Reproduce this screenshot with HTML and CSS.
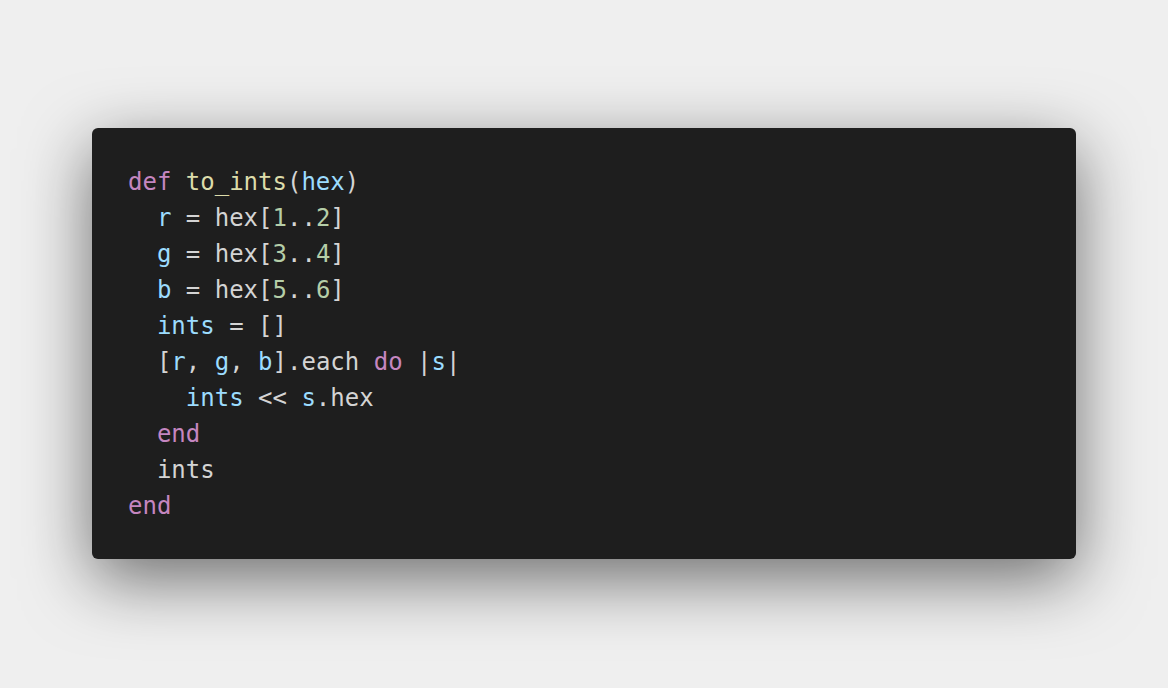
FILE: index.html
```html
<!DOCTYPE html>
<html>
<head>
<meta charset="utf-8">
<link rel="stylesheet" href="styles.css">
</head>
<body>
<div class="stage">
<pre class="card"><code><span class="kw">def</span> <span class="fn">to_ints</span>(<span class="var">hex</span>)
  <span class="var">r</span> = hex[<span class="num">1</span>..<span class="num">2</span>]
  <span class="var">g</span> = hex[<span class="num">3</span>..<span class="num">4</span>]
  <span class="var">b</span> = hex[<span class="num">5</span>..<span class="num">6</span>]
  <span class="var">ints</span> = []
  [<span class="var">r</span>, <span class="var">g</span>, <span class="var">b</span>].each <span class="kw">do</span> |<span class="var">s</span>|
    <span class="var">ints</span> &lt;&lt; <span class="var">s</span>.hex
  <span class="kw">end</span>
  ints
<span class="kw">end</span></code></pre>
</div>
</body>
</html>
```
FILE: styles.css
```css
html, body {
  margin: 0;
  padding: 0;
  background: #efefef;
}
.stage {
  width: 1168px;
  height: 687px;
  display: flex;
  align-items: center;
  justify-content: center;
}
.card {
  margin: 0;
  width: 984px;
  height: 431px;
  box-sizing: border-box;
  padding: 36px 36px 35px;
  background: #1e1e1e;
  border-radius: 6px;
  box-shadow: 0 20px 68px rgba(0, 0, 0, 0.55);
  font-family: "DejaVu Sans Mono", monospace;
  font-size: 24px;
  line-height: 36px;
  color: #d4d4d4;
}
.kw { color: #c586c0; }
.fn { color: #dcdcaa; }
.var { color: #9cdcfe; }
.num { color: #b5cea8; }
```
